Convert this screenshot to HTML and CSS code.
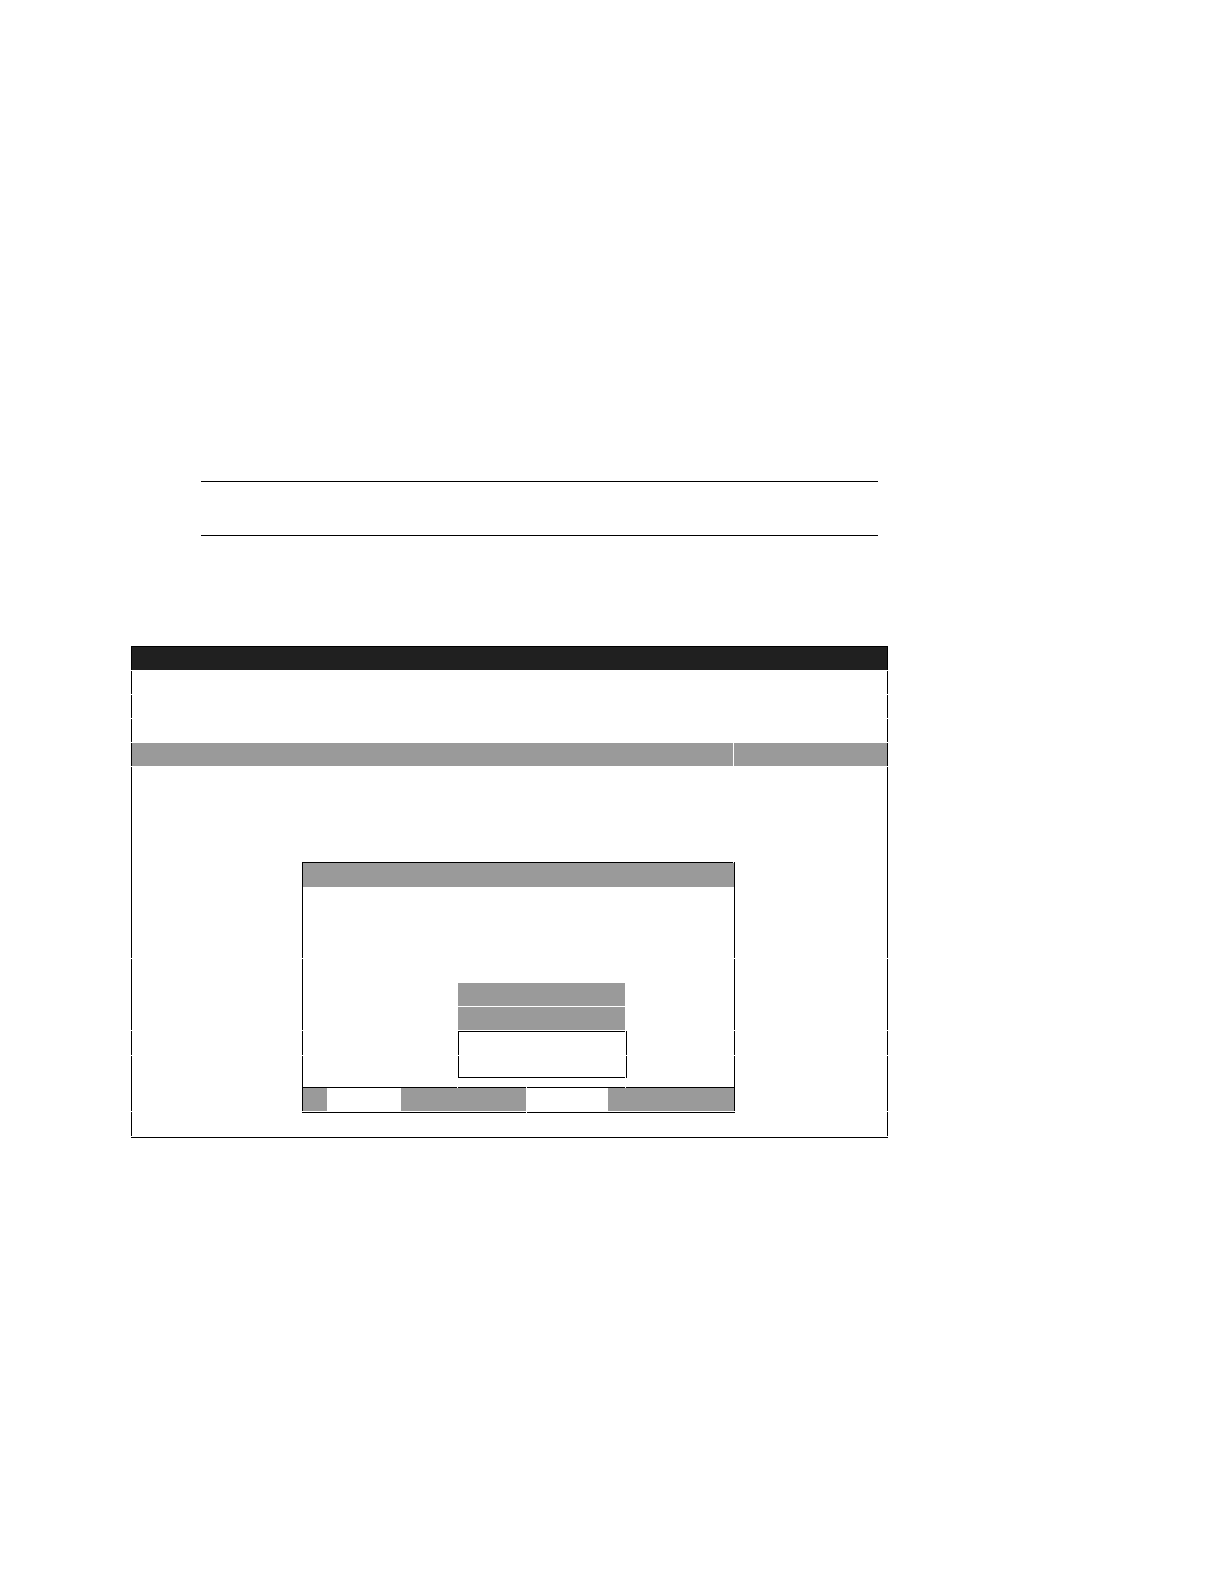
FILE: index.html
```
<!DOCTYPE html>
<html lang="en">
<head>
    <meta charset="UTF-8">
    <title>Screen layout</title>
    <link rel="stylesheet" href="styles.css">
</head>
<body>
<main class="page">
    <!-- heading rules -->
    <div class="heading"></div>

    <!-- main screen -->
    <section class="screen">
        <div class="title"></div>
        <div class="row"></div>
        <div class="row"></div>
        <div class="row"></div>
        <div class="row bar">
            <div class="bar-main"></div>
            <div class="bar-side"></div>
        </div>

        <!-- dialog top -->
        <div class="row row-top">
            <div class="dialog dialog-top">
                <div class="line top-line"></div>
                <div class="dialog-title"></div>
            </div>
        </div>
        <!-- selected items -->
        <div class="row row-items">
            <div class="dialog">
                <ul class="items">
                    <li></li>
                    <li></li>
                </ul>
            </div>
        </div>
        <!-- list box -->
        <div class="row row-list">
            <div class="dialog">
                <div class="list"><div class="list-in list-top"></div></div>
            </div>
        </div>
        <div class="row row-foot">
            <div class="dialog">
                <div class="list list-end"><div class="list-in list-bottom"></div></div>
                <div class="foot-line">
                    <div class="line"></div>
                    <div class="line"></div>
                    <div class="line"></div>
                    <div class="line"></div>
                </div>
                <div class="foot">
                    <div class="foot-start"></div>
                    <div class="foot-mid"></div>
                    <div class="foot-end"></div>
                </div>
            </div>
        </div>
        <div class="row row-last">
            <div class="dialog-bottom">
                <div class="line"></div>
                <div class="line"></div>
            </div>
        </div>
        <div class="line"></div>
    </section>
</main>
</body>
</html>
```
FILE: styles.css
```
*{
    box-sizing: border-box;
}
body{
    margin: 0;
    background: #fff;
}
.page{
    padding: 481px 336px 100px 131px;
}
.heading{
    height: 55px;
    margin: 0 10px 110px 70px;
    border-top: 1px solid #000;
    border-bottom: 1px solid #000;
}
.line{
    height: 1px;
    background: #000;
}

/* screen: the 1px gap cuts the side borders between rows */
.screen{
    display: flex;
    flex-direction: column;
    gap: 1px;
}
.title{
    height: 24px;
    background: #202020;
    border: 1px solid #000;
    border-bottom: 0;
}
.row{
    display: grid;
    grid-template-columns: 170fr 433px 152fr;
    height: 23px;
    border-left: 1px solid #000;
    border-right: 1px solid #000;
}
.bar{
    display: flex;
    gap: 1px;
}
.bar-main,
.bar-side{
    background: #9a9a9a;
}
.bar-main{
    flex: 601;
}
.bar-side{
    flex: 153;
}
.row-top{
    height: 191px;
}
.row-items{
    height: 71px;
}
.row-list,
.row-last{
    height: 24px;
}
.row-foot{
    height: 55px;
}

/* dialog */
.dialog,
.dialog-bottom{
    grid-column: 2;
}
.dialog{
    border-left: 1px solid #000;
    border-right: 1px solid #000;
}
.dialog-top{
    align-self: end;
    height: 96px;
}
.top-line{
    margin-right: 1px;
}
.dialog-title{
    height: 24px;
    background: #9a9a9a;
}
.items{
    display: grid;
    gap: 1px;
    width: 167px;
    margin: 24px 0 0 155px;
    padding: 0;
    list-style: none;
}
.items li{
    height: 23px;
    background: #9a9a9a;
}
.list{
    width: 169px;
    height: 24px;
    margin-left: 155px;
    padding-right: 1px;
    border-right: 1px solid #000;
}
.list-in{
    height: 100%;
    border-left: 1px solid #000;
}
.list-top{
    border-top: 1px solid #000;
}
.list-bottom{
    border-bottom: 1px solid #000;
}
.list-end{
    height: 22px;
    margin-bottom: 9px;
}
.foot-line{
    display: grid;
    grid-template-columns: 154px 68px 98px 108px;
    gap: 1px;
}
.foot{
    display: grid;
    grid-template-columns: 24px 74px 125px 82px 126px;
    height: 23px;
}
.foot div{
    background: #9a9a9a;
}
.foot-mid{
    grid-column: 3;
}
.foot-end{
    grid-column: 5;
}
.dialog-bottom{
    display: grid;
    grid-template-columns: 224px 208px;
    gap: 1px;
    align-content: start;
}
```
